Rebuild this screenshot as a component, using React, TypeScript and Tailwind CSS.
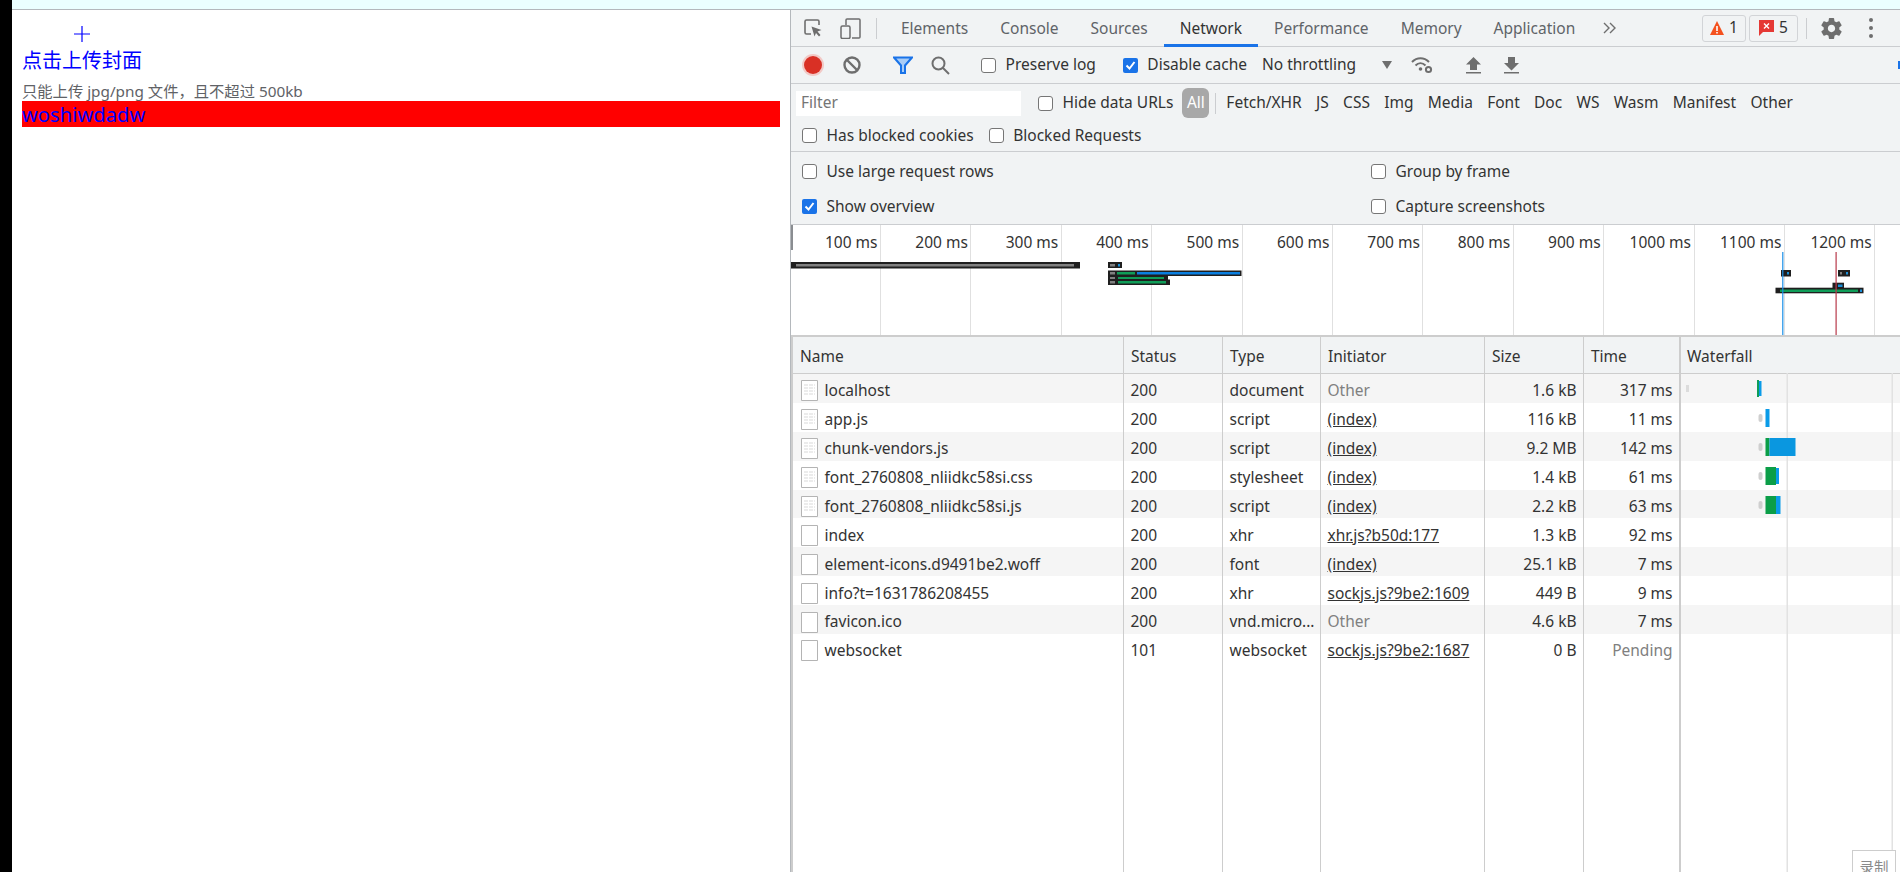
import type { ReactNode } from 'react'

const tabs = ['Elements', 'Console', 'Sources', 'Network', 'Performance', 'Memory', 'Application']
const filterTypes = ['Fetch/XHR', 'JS', 'CSS', 'Img', 'Media', 'Font', 'Doc', 'WS', 'Wasm', 'Manifest', 'Other']
const timeLabels = ['100 ms', '200 ms', '300 ms', '400 ms', '500 ms', '600 ms', '700 ms', '800 ms', '900 ms', '1000 ms', '1100 ms', '1200 ms', '']

const requests = [
  { name: 'localhost', status: '200', type: 'document', initiator: 'Other', size: '1.6 kB', time: '317 ms', lines: true },
  { name: 'app.js', status: '200', type: 'script', initiator: '(index)', size: '116 kB', time: '11 ms', lines: true },
  { name: 'chunk-vendors.js', status: '200', type: 'script', initiator: '(index)', size: '9.2 MB', time: '142 ms', lines: true },
  { name: 'font_2760808_nliidkc58si.css', status: '200', type: 'stylesheet', initiator: '(index)', size: '1.4 kB', time: '61 ms', lines: true },
  { name: 'font_2760808_nliidkc58si.js', status: '200', type: 'script', initiator: '(index)', size: '2.2 kB', time: '63 ms', lines: true },
  { name: 'index', status: '200', type: 'xhr', initiator: 'xhr.js?b50d:177', size: '1.3 kB', time: '92 ms', lines: false },
  { name: 'element-icons.d9491be2.woff', status: '200', type: 'font', initiator: '(index)', size: '25.1 kB', time: '7 ms', lines: false },
  { name: 'info?t=1631786208455', status: '200', type: 'xhr', initiator: 'sockjs.js?9be2:1609', size: '449 B', time: '9 ms', lines: false },
  { name: 'favicon.ico', status: '200', type: 'vnd.micro...', initiator: 'Other', size: '4.6 kB', time: '7 ms', lines: false },
  { name: 'websocket', status: '101', type: 'websocket', initiator: 'sockjs.js?9be2:1687', size: '0 B', time: 'Pending', lines: false },
]

// [x, y, w, h, fill], page coordinates
const overviewBars: Array<[number, number, number, number, string]> = [
  [791, 262, 289, 6.5, '#1f1f1f'],
  [796, 264, 278, 2.5, '#808080'],
  [1108, 262, 14, 6, '#1f1f1f'],
  [1110, 264, 5, 2.5, '#808080'],
  [1118, 264, 2, 2.5, '#1a8fd8'],
  [1108, 270.5, 133.5, 5.5, '#1f1f1f'],
  [1110, 272, 5, 2.5, '#808080'],
  [1117, 272, 18, 2.5, '#0f9d58'],
  [1137, 272, 103, 2.5, '#0a7fe0'],
  [1108, 275.5, 60, 4.5, '#1f1f1f'],
  [1110, 277, 5, 2, '#808080'],
  [1118, 277, 46, 2, '#0f9d58'],
  [1108, 279.5, 62, 5.5, '#1f1f1f'],
  [1110, 281, 5, 2.5, '#808080'],
  [1118, 281, 48, 2.5, '#0f9d58'],
  [1781, 270, 10, 6.5, '#1f1f1f'],
  [1787, 272, 2, 2.5, '#1a8fd8'],
  [1838, 270, 12, 6.5, '#1f1f1f'],
  [1840, 272, 2, 2.5, '#808080'],
  [1846, 272, 2, 2.5, '#1a8fd8'],
  [1832.5, 282.7, 11.5, 5.5, '#1f1f1f'],
  [1838, 284.5, 4.5, 2.5, '#1a8fd8'],
  [1775.5, 287.7, 88, 5.6, '#1f1f1f'],
  [1780, 289.5, 78, 2.5, '#0f9d58'],
  [1860, 289.5, 2, 2.5, '#1a8fd8'],
]

const waterfallBars: Array<[number, number, number, number, string]> = [
  [1686, 385, 3, 7, '#dcdcdc'],
  [1757, 380, 2, 17, '#0f9d58'],
  [1759, 381, 2.5, 15, '#0a9be8'],
  [1758.5, 414, 4, 8, '#cfcfcf'],
  [1765.5, 409, 4, 18, '#0a9be8'],
  [1758.5, 443, 4, 8, '#cfcfcf'],
  [1765.5, 438, 4, 18, '#0b9e48'],
  [1769.5, 438, 26, 18, '#0a97e0'],
  [1758.5, 472, 4, 8, '#cfcfcf'],
  [1765.5, 467, 10.5, 18, '#0b9e48'],
  [1776, 468, 3, 16, '#0a9be8'],
  [1758.5, 501, 4, 8, '#cfcfcf'],
  [1765.5, 496, 10.5, 18, '#0b9e48'],
  [1776, 496, 4.5, 18, '#0a9be8'],
]

function Sep({ className = 'h-[21px]' }: { className?: string }) {
  return <div className={`w-px shrink-0 bg-[#cbcdd0] ${className}`} />
}

function Check({ label, checked = false }: { label: string; checked?: boolean }) {
  return (
    <label className="flex items-center gap-[9.5px] whitespace-nowrap text-[#333]">
      {checked ? (
        <span className="flex h-[15px] w-[15px] items-center justify-center rounded-[2px] bg-[#1a73e8]">
          <svg viewBox="0 0 15 15" className="h-[15px] w-[15px]" fill="none" stroke="#fff" strokeWidth="2">
            <path d="M3.5 7.5l3 3 5-6.5" />
          </svg>
        </span>
      ) : (
        <span className="h-[15px] w-[15px] rounded-[3px] border border-[#767676] bg-white" />
      )}
      {label}
    </label>
  )
}

function ColCell({ children, className = '' }: { children?: ReactNode; className?: string }) {
  return (
    <div className={`flex h-[28.9px] shrink-0 items-center overflow-hidden whitespace-nowrap pt-[5px] odd:bg-[#f5f5f5] even:bg-white ${className}`}>
      {children}
    </div>
  )
}

function Column({ title, width, values, right = false }: { title: string; width: string; values: ReactNode[]; right?: boolean }) {
  return (
    <div className={`flex shrink-0 flex-col border-r border-[#cdcdcd] ${width}`}>
      <div className="flex h-[37px] shrink-0 items-center border-b border-[#cdcdcd] bg-[#f1f3f4] px-[7px] pt-[4px] text-[#333]">{title}</div>
      <div className="flex flex-col">
        {values.map((v, i) => (
          <ColCell key={i} className={`px-[6.5px] ${right ? 'justify-end' : ''}`}>
            {v}
          </ColCell>
        ))}
      </div>
    </div>
  )
}

function FileIcon({ lines }: { lines: boolean }) {
  return (
    <svg viewBox="0 0 17 21" className="h-[21px] w-[17px] shrink-0">
      <path d="M.5.5h16v20H.5z" fill="#fff" stroke="#b4b4b4" />
      {lines && <path d="M3 5h11M3 8h11M3 11h11M3 14h11" stroke="#d9d9d9" strokeDasharray="4 1" />}
    </svg>
  )
}

export default function App() {
  return (
    <div className="flex h-[872px] w-[1900px] overflow-hidden bg-black font-['Noto_Sans','Noto_Sans_CJK_SC',sans-serif]">
      <div className="ml-[12px] flex min-w-0 flex-1 flex-col">
        <div className="h-[9px] shrink-0 bg-[#ebffff]" />
        <div className="h-px shrink-0 bg-[#b4b8bc]" />
        <div className="flex min-h-0 flex-1">
          {/* 页面内容 */}
          <div className="w-[778px] shrink-0 bg-white pt-[16px] pl-[10px] pr-[10px] text-[#0000ff]">
            <div className="ml-[52px] flex h-[16px] w-[16px] items-center justify-center">
              <svg viewBox="0 0 16 16" className="h-[16px] w-[16px]" stroke="#0000ff" strokeWidth="1.2">
                <path d="M0 8h16M8 0v16" />
              </svg>
            </div>
            <div className="mt-[3px] h-[31px] text-[20px] leading-[31px]">点击上传封面</div>
            <div className="mt-[6px] h-[19px] text-[15.3px] leading-[19px] text-[#606266]">只能上传 jpg/png 文件，且不超过 500kb</div>
            <div className="h-[26px] bg-[#ff0000] text-[20.2px] leading-[26px]">woshiwdadw</div>
          </div>

          {/* DevTools */}
          <div className="relative flex min-w-0 flex-1 flex-col overflow-hidden border-l border-[#b4b8bc] bg-white text-[15.5px] text-[#333]">
            <div className="flex h-[37px] shrink-0 items-center border-b border-[#cbcdd0] bg-[#f1f3f4]">
              <svg viewBox="0 0 18 18" className="ml-[13px] h-[18px] w-[18px] shrink-0" fill="none" stroke="#6e6e6e" strokeWidth="1.6">
                <path d="M7 15H2.500A1.500 1.500 0 0 1 1 13.500V2.500A1.500 1.500 0 0 1 2.500 1h11A1.500 1.500 0 0 1 15 2.500V6" />
                <path d="M7.500 7.500l10 3.500-4 1.500 3 3.500-1.500 1.500-3-3.500-1.500 3.500z" fill="#6e6e6e" stroke="none" />
              </svg>
              <svg viewBox="0 0 21 21" className="ml-[18px] h-[21px] w-[21px] shrink-0" fill="none" stroke="#6e6e6e" strokeWidth="1.5">
                <path d="M6 7V2a1 1 0 0 1 1-1h12a1 1 0 0 1 1 1v17a1 1 0 0 1-1 1h-7" />
                <rect x="1" y="8" width="9" height="12.500" rx="1.500" />
              </svg>
              <Sep className="ml-[15px] h-[21px]" />
              <div className="ml-[8px] flex h-full">
                {tabs.map((tab) => (
                  <div
                    key={tab}
                    className={`flex h-[37px] items-center px-[16px] ${tab === 'Network' ? 'border-b-[3px] border-[#1a73e8] pt-[3px] text-[#333]' : 'text-[#5f6368]'}`}
                  >
                    {tab}
                  </div>
                ))}
              </div>
              <svg viewBox="0 0 14 12" className="ml-[12px] h-[12px] w-[14px] shrink-0" fill="none" stroke="#6e6e6e" strokeWidth="1.4">
                <path d="M1 1l5 5-5 5M7 1l5 5-5 5" />
              </svg>
              <div className="ml-auto flex items-center">
                <div className="flex h-[27px] w-[44px] items-center justify-center gap-[5px] rounded-[3px] border border-[#d2d4d7]">
                  <svg viewBox="0 0 14 14" className="h-[14px] w-[14px]">
                    <path d="M7 0l7 14H0z" fill="#f4511e" />
                    <path d="M6.200 5h1.600v5H6.200zM6.200 11h1.600v1.500H6.200z" fill="#fff" />
                  </svg>
                  1
                </div>
                <div className="ml-[3px] flex h-[27px] w-[49px] items-center justify-center gap-[5px] rounded-[3px] border border-[#d2d4d7]">
                  <svg viewBox="0 0 15 16" className="h-[16px] w-[15px]">
                    <path d="M0 0h15v12H4l-4 4z" fill="#e53935" />
                    <path d="M5 3.500l5 5M10 3.500l-5 5" stroke="#fff" strokeWidth="1.400" />
                  </svg>
                  5
                </div>
                <Sep className="ml-[8px] h-[21px]" />
                <svg viewBox="0 0 24 24" className="ml-[12px] h-[25px] w-[25px]" fill="#6e6e6e">
                  <path d="M19.430 12.980c.040-.320.070-.640.070-.980s-.030-.660-.070-.980l2.110-1.650c.190-.150.240-.420.120-.640l-2-3.460c-.120-.220-.390-.300-.610-.220l-2.490 1c-.520-.400-1.080-.730-1.690-.980l-.380-2.650A.488.488 0 0 0 14 2h-4c-.250 0-.460.180-.490.420l-.380 2.650c-.610.250-1.170.590-1.690.980l-2.490-1c-.230-.090-.490 0-.610.220l-2 3.460c-.130.220-.070.490.120.640l2.110 1.650c-.040.320-.070.650-.070.980s.030.660.070.980l-2.110 1.650c-.190.150-.240.420-.120.640l2 3.460c.120.220.390.300.610.220l2.490-1c.520.400 1.080.730 1.690.980l.380 2.650c.030.240.240.420.490.420h4c.250 0 .460-.180.490-.420l.380-2.650c.610-.250 1.170-.590 1.690-.980l2.490 1c.230.090.490 0 .610-.220l2-3.460c.120-.220.070-.490-.120-.640l-2.110-1.650zM12 15.500c-1.930 0-3.500-1.570-3.500-3.500s1.570-3.500 3.500-3.500 3.500 1.570 3.500 3.500-1.570 3.500-3.500 3.500z" />
                </svg>
                <div className="ml-[25px] mr-[27px] flex flex-col gap-[4px]">
                  <span className="h-[4px] w-[4px] rounded-full bg-[#6e6e6e]" />
                  <span className="h-[4px] w-[4px] rounded-full bg-[#6e6e6e]" />
                  <span className="h-[4px] w-[4px] rounded-full bg-[#6e6e6e]" />
                </div>
              </div>
            </div>

            <div className="flex h-[37px] shrink-0 items-center border-b border-[#cbcdd0] bg-[#f1f3f4]">
              <div className="ml-[13px] flex h-[18px] w-[18px] shrink-0 items-center justify-center rounded-full bg-[#d93025] shadow-[0_0_0_2px_#f2c9c6]" />
              <svg viewBox="0 0 18 18" className="ml-[21px] h-[18px] w-[18px] shrink-0" fill="none" stroke="#6e6e6e" strokeWidth="2.400">
                <circle cx="9" cy="9" r="7.500" />
                <path d="M4 4l10 10" />
              </svg>
              <Sep className="ml-[16px]" />
              <svg viewBox="0 0 20 18" className="ml-[15px] h-[18px] w-[20px] shrink-0" fill="none" stroke="#1a73e8" strokeWidth="2">
                <path d="M1 1.500h18l-7 8V17H8V9.500z" fill="#a9cdf7" />
              </svg>
              <svg viewBox="0 0 19 19" className="ml-[18px] h-[19px] w-[19px] shrink-0" fill="none" stroke="#6e6e6e" strokeWidth="2">
                <circle cx="7.500" cy="7.500" r="6" />
                <path d="M12 12l6 6" />
              </svg>
              <Sep className="ml-[17px]" />
              <div className="ml-[13px]">
                <Check label="Preserve log" />
              </div>
              <Sep className="ml-[13px]" />
              <div className="ml-[13px]">
                <Check label="Disable cache" checked />
              </div>
              <span className="ml-[15px] whitespace-nowrap">No throttling</span>
              <div className="ml-[26px] h-0 w-0 border-x-[5px] border-t-[8px] border-x-transparent border-t-[#6e6e6e]" />
              <svg viewBox="0 0 22 18" className="ml-[19px] h-[18px] w-[22px] shrink-0" fill="none" stroke="#6e6e6e" strokeWidth="2">
                <path d="M1 6c5-5 12-5 17 0M4.500 9.500c3-3 7-3 10 0" />
                <circle cx="9.500" cy="13" r="1.800" fill="#6e6e6e" stroke="none" />
                <circle cx="17.500" cy="13.500" r="2.600" strokeWidth="2" />
              </svg>
              <Sep className="ml-[14px]" />
              <svg viewBox="0 0 15 17" className="ml-[18px] h-[17px] w-[15px] shrink-0" fill="#6e6e6e">
                <path d="M7.500 0L15 7.500h-4V13H4V7.500H0zM0 15h15v1.500H0z" />
              </svg>
              <svg viewBox="0 0 15 17" className="ml-[23px] h-[17px] w-[15px] shrink-0" fill="#6e6e6e">
                <path d="M4 0h7v6h4l-7.500 7.500L0 6h4zM0 15h15v1.500H0z" />
              </svg>
              <Sep className="ml-[364px]" />
              <span className="ml-auto h-[8px] w-[2px] bg-[#1a73e8]" />
            </div>

            <div className="flex h-[68px] shrink-0 flex-col border-b border-[#cbcdd0] bg-[#f1f3f4]">
              <div className="flex h-[38px] items-center">
                <div className="ml-[5px] flex h-[25px] w-[225px] items-center bg-white pl-[5px] text-[#757575]">Filter</div>
                <div className="ml-[17px]">
                  <Check label="Hide data URLs" />
                </div>
                <div className="ml-[9px] flex h-[30px] w-[27px] items-center justify-center rounded-[6px] bg-[#a8a8a8] text-white">All</div>
                <Sep className="ml-[6px] h-[21px]" />
                <div className="ml-[10px] flex gap-[14.3px] whitespace-nowrap">
                  {filterTypes.map((t) => (
                    <span key={t}>{t}</span>
                  ))}
                </div>
              </div>
              <div className="flex h-[27px] items-center gap-[15px] pl-[11px]">
                <Check label="Has blocked cookies" />
                <Check label="Blocked Requests" />
              </div>
            </div>

            <div className="flex h-[73px] shrink-0 border-b border-[#cbcdd0] bg-[#f1f3f4] pl-[11px]">
              <div className="flex w-[569px] flex-col pt-[2px]">
                <div className="flex h-[35px] items-center">
                  <Check label="Use large request rows" />
                </div>
                <div className="flex h-[35px] items-center">
                  <Check label="Show overview" checked />
                </div>
              </div>
              <div className="flex flex-col pt-[2px]">
                <div className="flex h-[35px] items-center">
                  <Check label="Group by frame" />
                </div>
                <div className="flex h-[35px] items-center">
                  <Check label="Capture screenshots" />
                </div>
              </div>
            </div>

            {/* 时间线总览 */}
            <div className="relative flex h-[112px] shrink-0 border-b-2 border-[#cdcdcd] pl-[2px]">
              <div className="absolute left-0 top-0 h-[25px] w-[2px] bg-[#8a8d91]" />
              {timeLabels.map((label, i) => (
                <div
                  key={i}
                  className={`h-full shrink-0 whitespace-nowrap border-r border-[#e0e0e0] pr-[2.5px] pt-[5px] text-right leading-[24px] ${i === 0 ? 'w-[88px]' : 'w-[90.4px]'}`}
                >
                  {label}
                </div>
              ))}
              <svg viewBox="791 225 1109 110" className="absolute left-0 top-0 h-[110px] w-[1109px]">
                {overviewBars.map(([x, y, w, h, fill], i) => (
                  <rect key={i} x={x} y={y} width={w} height={h} fill={fill} />
                ))}
                <rect x="1782.200" y="252" width="1.200" height="83" fill="#1a8fe8" />
                <rect x="1835.500" y="252" width="1.200" height="83" fill="#b8394a" />
              </svg>
            </div>

            {/* 请求表格 */}
            <div className="relative flex min-h-0 flex-1 border-l-2 border-[#cdcdcd]">
              <Column
                title="Name"
                width="w-[331px]"
                values={requests.map((r) => (
                  <span key={r.name} className="flex items-center gap-[7px] pl-[1px]">
                    <FileIcon lines={r.lines} />
                    {r.name}
                  </span>
                ))}
              />
              <Column title="Status" width="w-[99px]" values={requests.map((r) => r.status)} />
              <Column title="Type" width="w-[98px]" values={requests.map((r) => r.type)} />
              <Column
                title="Initiator"
                width="w-[164px]"
                values={requests.map((r) =>
                  r.initiator === 'Other' ? <span className="text-[#808080]">Other</span> : <span className="underline">{r.initiator}</span>,
                )}
              />
              <Column title="Size" width="w-[99px]" values={requests.map((r) => r.size)} right />
              <Column
                title="Time"
                width="w-[96px]"
                values={requests.map((r) => (r.time === 'Pending' ? <span className="text-[#808080]">Pending</span> : r.time))}
                right
              />
              <div className="flex min-w-0 flex-1 flex-col border-l border-[#cdcdcd]">
                <div className="flex h-[37px] shrink-0 items-center border-b border-[#cdcdcd] bg-[#f1f3f4] px-[6px] pt-[4px]">Waterfall</div>
                <div className="flex flex-col">
                  {requests.map((r) => (
                    <ColCell key={r.name} />
                  ))}
                </div>
              </div>
              <svg viewBox="1681 336 219 536" className="absolute bottom-0 right-0 h-[536px] w-[219px]">
                <rect x="1786.500" y="373" width="1.500" height="499" fill="#e2e2e2" />
                <rect x="1891.500" y="373" width="1.500" height="499" fill="#e2e2e2" />
                {waterfallBars.map(([x, y, w, h, fill], i) => (
                  <rect key={i} x={x} y={y} width={w} height={h} rx={fill === '#cfcfcf' ? 2 : 0} fill={fill} />
                ))}
              </svg>
            </div>

            <div className="absolute bottom-[-14px] right-[4px] flex h-[36px] w-[44px] items-center justify-center border border-[#cdcdcd] bg-white text-[14.500px] text-[#8a8a8a]">
              录制
            </div>
          </div>
        </div>
      </div>
    </div>
  )
}
